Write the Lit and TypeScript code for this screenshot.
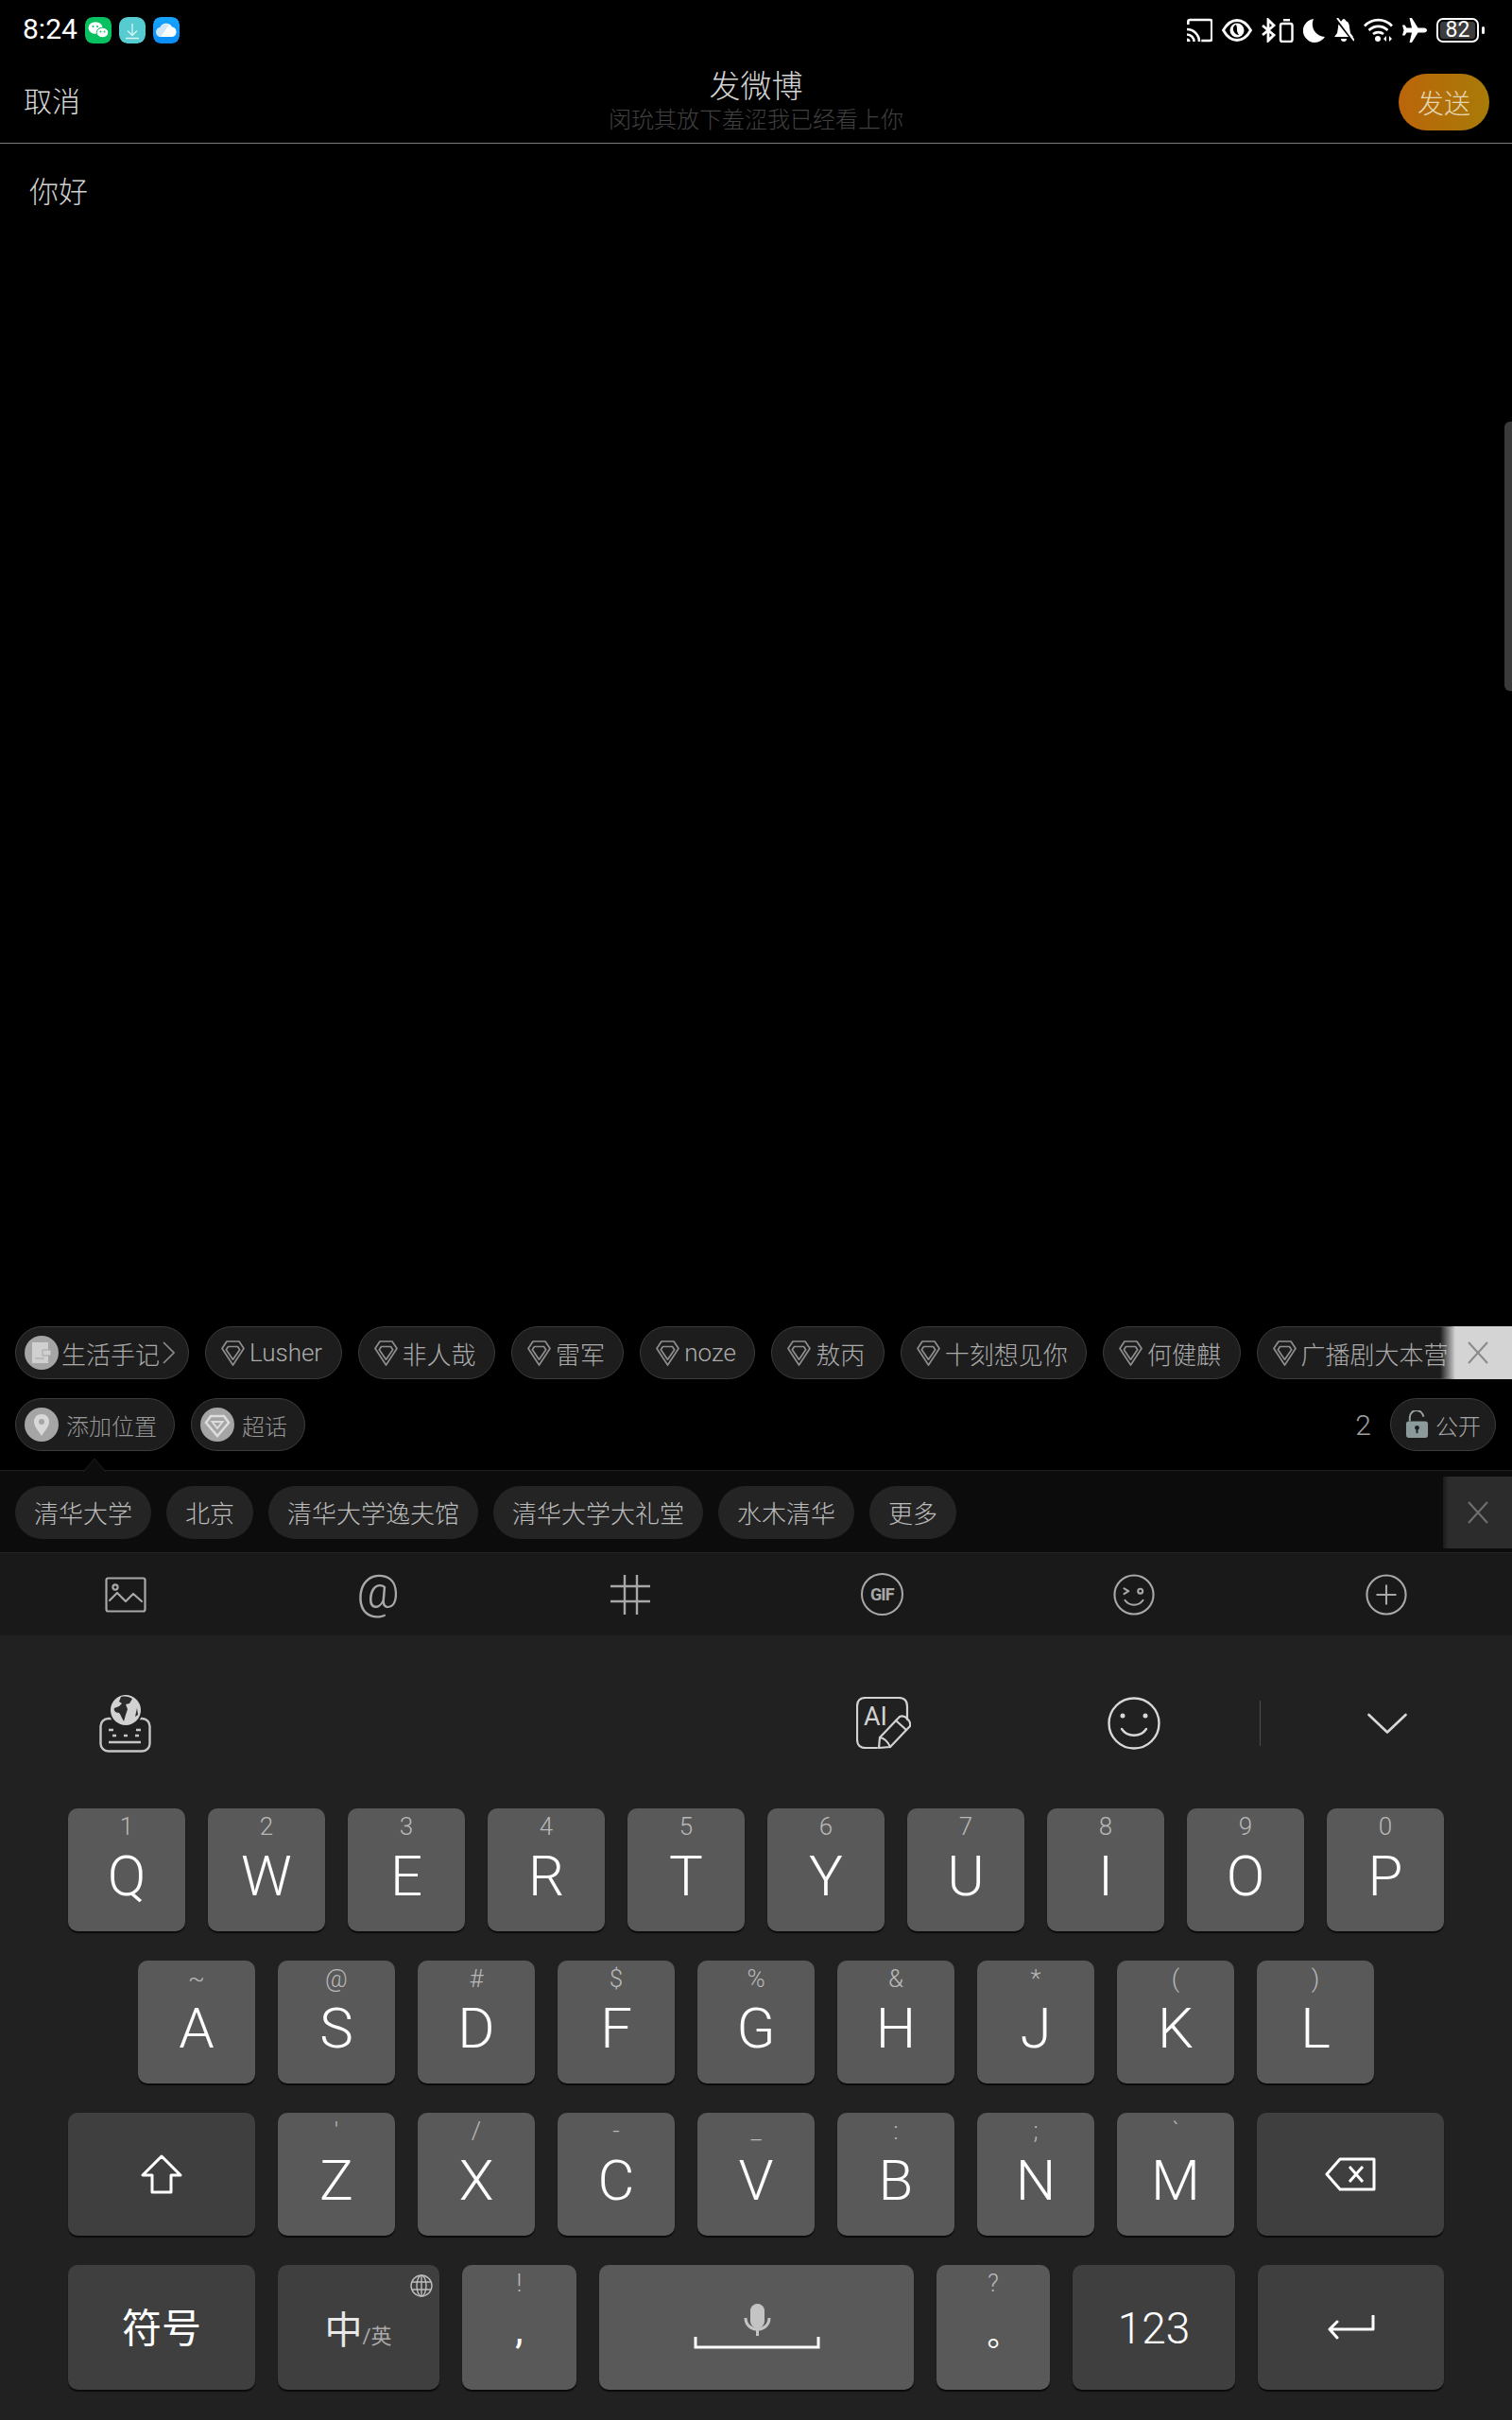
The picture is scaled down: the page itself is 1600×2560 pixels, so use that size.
import { LitElement, html, css } from "lit";
import { customElement } from "lit/decorators.js";

const diamond = html`<svg class="dia" viewBox="0 0 25 30" fill="none" stroke="#8e8e8e" stroke-width="1.7" stroke-linejoin="round"><path d="M6 3h13l5 7.5L12.5 28 1 10.5z"/><path d="M7.5 8.5h10l2.2 3.2-7.2 10.5-7.2-10.5z"/></svg>`;
const closeX = (c: string) => html`<svg class="x" viewBox="0 0 22 24" fill="none" stroke="${c}" stroke-width="2"><path d="M1 1l20 22M21 1L1 23"/></svg>`;

const tags = ["Lusher", "非人哉", "雷军", "noze", "敖丙", "十刻想见你", "何健麒", "广播剧大本营"];
const places = ["清华大学", "北京", "清华大学逸夫馆", "清华大学大礼堂", "水木清华", "更多"];
const rows: [string, string][][] = [
  [["Q","1"],["W","2"],["E","3"],["R","4"],["T","5"],["Y","6"],["U","7"],["I","8"],["O","9"],["P","0"]],
  [["A","~"],["S","@"],["D","#"],["F","$"],["G","%"],["H","&"],["J","*"],["K","("],["L",")"]],
  [["Z","'"],["X","/"],["C","-"],["V","_"],["B",":"],["N",";"],["M","\`"]],
];

const toolIcons = [
  html`<svg class="ti" viewBox="0 0 44 38" fill="none" stroke="#a8a8a8" stroke-width="2.2" stroke-linejoin="round" stroke-linecap="round"><rect x="1.5" y="1.5" width="41" height="35" rx="2"/><circle cx="11" cy="11" r="2.6"/><path d="M5 25l8-8 9 9 8-8 9 8"/></svg>`,
  html`<span class="at">@</span>`,
  html`<svg class="ti" viewBox="0 0 44 44" fill="none" stroke="#a8a8a8" stroke-width="2.4"><path d="M16 1v42M29 1v42M1 13h42M1 29h42"/></svg>`,
  html`<span class="ring"><span class="gif">GIF</span></span>`,
  html`<svg class="ti" viewBox="0 0 46 46" fill="none" stroke="#a8a8a8" stroke-width="2.2" stroke-linecap="round" stroke-linejoin="round"><circle cx="23" cy="23" r="21.5"/><path d="M12 16l5 3-5 3"/><circle cx="30" cy="19" r="2.6"/><path d="M13 29c5 7 15 7 20 0"/></svg>`,
  html`<svg class="ti" viewBox="0 0 46 46" fill="none" stroke="#a8a8a8" stroke-width="2.2"><circle cx="23" cy="23" r="21.5"/><path d="M23 12v22M12 23h22"/></svg>`,
];

@customElement("app-root")
export class AppRoot extends LitElement {
  static styles = css`
    :host { display: flex; flex-direction: column; width: 1600px; height: 2560px; background: #000; position: relative; overflow: hidden;
      font-family: Roboto, "Noto Sans CJK SC", sans-serif; font-weight: 300; }
    .status { height: 64px; display: flex; align-items: center; padding: 0 28px 0 24px; color: #fff; flex: none; }
    .time { font-size: 30px; font-weight: 400; line-height: 1; margin-right: 8px; position: relative; top: -1px; }
    .apps { display: flex; gap: 8px; }
    .app { width: 28px; height: 28px; border-radius: 8px; display: block; }
    .sys { margin-left: auto; display: flex; align-items: center; gap: 10px; }
    .sys svg { display: block; }
    .bat { width: 52px; height: 26px; display: flex; align-items: center; gap: 3px; }
    .batbody { width: 45px; height: 26px; box-sizing: border-box; border: 2px solid #fff; border-radius: 7px; padding: 2px; display: flex; }
    .batfill { width: 38px; background: #3c3c3c; border-radius: 3px; color: #fff; font-size: 23px; font-weight: 400; line-height: 18px; text-align: center; }
    .nub { width: 3px; height: 8px; background: #fff; border-radius: 2px; }

    .header { height: 87px; flex: none; display: grid; grid-template-columns: 1fr auto 1fr; align-items: center; border-bottom: 1px solid #7c7c7c; padding: 0 25px; }
    .cancel { font-size: 30px; color: #dcdcdc; line-height: 1.2; }
    .mid { text-align: center; margin-top: -1px; }
    .title { font-size: 33px; color: #d4d4d4; line-height: 40px; }
    .sub { font-size: 24px; color: #414141; line-height: 30px; }
    .send { justify-self: end; width: 96px; height: 60px; border-radius: 30px; background: linear-gradient(90deg, #bb650a, #a87b08); color: #e6d7b4; font-size: 28px; display: flex; align-items: center; justify-content: center; margin-right: -1px; }

    .editor { flex: 1; padding: 32px 31px; font-size: 31px; color: #d0d0d0; line-height: 40px; }
    .scroll { position: absolute; right: 0; top: 446px; width: 8px; height: 285px; background: #3a3a3a; border-radius: 6px 0 0 6px; }

    .tagrow { flex: none; height: 56px; position: relative; display: flex; gap: 17px; padding-left: 16px; overflow: hidden; white-space: nowrap; }
    .pill { flex: none; height: 56px; box-sizing: border-box; border: 1.5px solid #3c3c3c; background: #1d1d1d; border-radius: 28px; display: flex; align-items: center; padding: 0 19.4px 0 16px; gap: 5px; font-size: 26px; color: #ababab; }
    .pill.first { padding: 0 14px 0 9px; gap: 3px; }
    .dia { width: 25px; height: 30px; flex: none; display: block; }
    .circ { width: 36px; height: 36px; flex: none; display: block; }
    .fade { position: absolute; right: 0; top: 0; width: 76px; height: 56px; background: linear-gradient(90deg, rgba(212,212,212,0), #d4d4d4 16px); display: flex; align-items: center; justify-content: flex-end; padding-right: 25px; box-sizing: border-box; }
    .x { width: 22px; height: 24px; display: block; }

    .row2 { flex: none; height: 56px; margin-top: 20px; display: flex; align-items: center; gap: 17px; padding: 0 17px 0 16px; }
    .pill.small { font-size: 24px; color: #979797; padding: 0 18px 0 9px; gap: 8px; }
    .count { margin-left: auto; font-size: 30px; color: #a0a0a0; margin-right: 3px; }
    .pill.pub { padding: 0 15px; gap: 7px; font-size: 24px; color: #a6a6a6; }
    .lock { width: 25px; height: 29px; display: block; margin-top: -2px; }

    .panel { flex: none; height: 88px; margin-top: 20px; box-sizing: border-box; background: #0c0c0c; border-top: 1px solid #1e1e1e; border-bottom: 1px solid #242424; padding: 16px 0 0 16px; display: flex; gap: 16px; position: relative; }
    .arrow { position: absolute; left: 88px; top: -13px; width: 24px; height: 14px; }
    .chip { height: 56px; box-sizing: border-box; padding: 0 20px 2px; border-radius: 28px; background: #242424; color: #bcbcbc; font-size: 26px; display: flex; align-items: center; }
    .pclose { position: absolute; right: 0; top: 6px; height: 76px; width: 73px; background: linear-gradient(90deg, #1b1b1b, #2c2c2c 6px); display: flex; align-items: center; justify-content: flex-end; padding-right: 25px; box-sizing: border-box; }

    .tools { flex: none; height: 87px; background: #191919; display: grid; grid-template-columns: repeat(6, 1fr); align-items: center; justify-items: center; }
    .ti { width: 44px; height: 44px; display: block; }
    .at { font-size: 50px; color: #a8a8a8; line-height: 44px; font-weight: 300; margin-top: -5px; }
    .ring { width: 41px; height: 41px; border: 2.2px solid #a8a8a8; border-radius: 50%; display: flex; align-items: center; justify-content: center; }
    .gif { font-size: 18px; font-weight: 700; color: #a8a8a8; letter-spacing: -1px; }

    .kb { flex: none; height: 830px; background: #212121; display: flex; flex-direction: column; }
    .kbtop { height: 183px; flex: none; box-sizing: border-box; padding-top: 3px; display: flex; align-items: center; padding-left: 105px; }
    .kbtop svg { display: block; flex: none; }
    .ai { margin-left: 746px; }
    .smile { margin-left: 208px; }
    .div { margin-left: 105px; width: 1px; height: 48px; background: #4c4c4c; }
    .chev { margin-left: 113px; }
    .rows { display: flex; flex-direction: column; gap: 31px; }
    .row { display: flex; gap: 24px; justify-content: center; }
    .key { width: 124px; height: 130px; flex: none; background: #595959; border-radius: 10px; box-shadow: 0 2px 1px #0b0b0b; display: flex; flex-direction: column; align-items: center; color: #fff; }
    .last .key { height: 132px; }
    .fn { background: #3f3f3f; align-items: center; justify-content: center; position: relative; }
    .hint { height: 38px; font-size: 26px; line-height: 38px; color: #b8b8b8; }
    .letter { font-size: 60px; line-height: 68px; }
    .w198 { width: 198px; } .w171 { width: 171px; } .w121 { width: 121px; } .w333 { width: 333px; }
    .w120 { width: 120px; } .w172 { width: 172px; } .w197 { width: 197px; }
    .sym { font-size: 42px; font-weight: 400; line-height: 1; margin-top: 3px; }
    .zh { font-size: 40px; display: flex; align-items: baseline; color: #e8e8e8; font-weight: 400; margin-left: -1px; }
    .en { font-size: 22px; color: #aaa; }
    .globe { position: absolute; right: 7px; top: 10px; width: 24px; height: 24px; }
    .comma { font-size: 42px; line-height: 62px; font-weight: 400; }
    .period { font-family: "Noto Sans CJK TC", sans-serif; font-size: 34px; line-height: 88px; font-weight: 400; }
    .num { font-size: 46px; line-height: 1; margin-top: 2px; }
    .space { justify-content: flex-start; align-items: center; padding-top: 41px; box-sizing: border-box; }
    .space svg { display: block; }
  `;

  render() {
    return html`
      <div class="status">
        <span class="time">8:24</span>
        <div class="apps">
          <svg class="app" viewBox="0 0 28 28"><rect width="28" height="28" rx="8" fill="#08c160"/><ellipse cx="11" cy="11.5" rx="7.5" ry="6.3" fill="#fff"/><ellipse cx="18.5" cy="16.5" rx="6.3" ry="5.3" fill="#fff" stroke="#08c160"/><circle cx="8.5" cy="10" r="1" fill="#08c160"/><circle cx="13" cy="10" r="1" fill="#08c160"/><circle cx="16.5" cy="15.5" r=".9" fill="#08c160"/><circle cx="20.5" cy="15.5" r=".9" fill="#08c160"/></svg>
          <svg class="app" viewBox="0 0 28 28"><rect width="28" height="28" rx="9" fill="#56cbd0"/><path d="M14 7v12M9 14.5l5 5 5-5M7 22.5h14" fill="none" stroke="#d8f4f5" stroke-width="1.3"/></svg>
          <svg class="app" viewBox="0 0 28 28"><defs><linearGradient id="bl" x1="0" y1="0" x2="0" y2="1"><stop offset="0" stop-color="#17a4ff"/><stop offset="1" stop-color="#0a8cf5"/></linearGradient></defs><rect width="28" height="28" rx="8" fill="url(#bl)"/><path d="M8 21a5 5 0 0 1-.6-9.9A7 7 0 0 1 20 10.5 5.3 5.3 0 0 1 20 21z" fill="#fff"/><path d="M8 21a5 5 0 0 1-.6-9.9A7 7 0 0 1 17 8z" fill="#cfe6fb"/></svg>
        </div>
        <div class="sys">
          <svg width="27" height="26" viewBox="0 0 27 26" fill="none" stroke="#fff" stroke-width="2.6"><path d="M1.300 7V4q0-2 2-2h21q2 0 2 2v18q0 2-2 2h-9"/><path d="M0 12a13 13 0 0 1 13 13M0 17.500a7.500 7.500 0 0 1 7.500 7.500"/><path d="M0 21.500a3.500 3.500 0 0 1 3.500 3.500H0z" fill="#fff" stroke="none"/></svg>
          <svg width="32" height="26" viewBox="0 0 32 26"><path d="M1.500 13C6 5 11 2.500 16 2.500S26 5 30.500 13C26 21 21 23.500 16 23.500S6 21 1.500 13z" fill="none" stroke="#fff" stroke-width="2.800"/><circle cx="16" cy="13" r="7.500" fill="#fff"/><path d="M15 7c-3 1-4 5-2 8 1 2 3 3 5 3-1-2-2-3-2-5s0-4-1-6z" fill="#000"/></svg>
          <svg width="34" height="26" viewBox="0 0 34 26" fill="none" stroke="#fff"><path d="M1 8l12 10-6 6V2l6 6L1 18" stroke-width="2.800"/><rect x="20" y="6" width="12.500" height="19" rx="2" stroke-width="2.400"/><rect x="23" y="1" width="7" height="2.400" fill="#fff" stroke="none"/></svg>
          <svg width="23" height="26" viewBox="0 0 23 26"><path d="M11 1A12.500 12.500 0 1 0 23 20 13.500 13.500 0 0 1 11 1z" fill="#fff"/></svg>
          <svg width="21" height="26" viewBox="0 0 21 26"><path d="M10 1c1 0 2 1 2 2 3 1 4 4 4 7l1 6 3 4H0l3-4 1-6c0-3 1-6 4-7 0-1 1-2 2-2z" fill="#fff"/><path d="M7 22h6c0 2-1 3-3 3s-3-1-3-3z" fill="#fff"/><path d="M2 1l19 24" stroke="#000" stroke-width="3"/><path d="M3 0l18 24" stroke="#fff" stroke-width="2"/></svg>
          <svg width="31" height="26" viewBox="0 0 31 26" fill="none" stroke="#fff" stroke-width="2.600"><path d="M1 8.500c8-8.500 21-8.500 29 0M5.500 13c6-5.500 14-5.500 20 0M10 17c3-2.500 8-2.500 11 0"/><circle cx="15" cy="22" r="3" fill="#fff" stroke="none"/><path d="M24 19v6l-3-3zM27 19v6l3-3z" fill="#fff" stroke="none"/></svg>
          <svg width="26" height="26" viewBox="0 0 26 26"><path d="M26 13c0-1.500-1.500-2.500-3-2.500h-6.500L10 0H7.500l2.500 10.500H4.500L2.500 7.500H0L1.500 13 0 18.500h2.500l2-3H10L7.500 26H10l6.500-10.500H23c1.500 0 3-1 3-2.500z" fill="#fff"/></svg>
          <div class="bat"><div class="batbody"><div class="batfill">82</div></div><div class="nub"></div></div>
        </div>
      </div>

      <div class="header">
        <span class="cancel">取消</span>
        <div class="mid"><div class="title">发微博</div><div class="sub">闵玧其放下羞涩我已经看上你</div></div>
        <div class="send">发送</div>
      </div>

      <div class="editor">你好</div>
      <div class="scroll"></div>

      <div class="tagrow">
        <div class="pill first">
          <svg class="circ" viewBox="0 0 36 36"><circle cx="18" cy="18" r="18" fill="#a5a5a5"/><path d="M8 7h17v22H8z" fill="#d0d0d0"/><path d="M19 15h9v6h-9z" fill="#d0d0d0" stroke="#a5a5a5"/><path d="M11 24h10" stroke="#a5a5a5"/></svg>
          生活手记
          <svg width="13" height="24" viewBox="0 0 13 24" fill="none" stroke="#8c8c8c" stroke-width="1.600"><path d="M1 1l11 11L1 23"/></svg>
        </div>
        ${tags.map((t) => html`<div class="pill">${diamond}${t}</div>`)}
        <div class="fade">${closeX("#8a8a8a")}</div>
      </div>

      <div class="row2">
        <div class="pill small">
          <svg class="circ" viewBox="0 0 36 36"><circle cx="18" cy="18" r="18" fill="#a5a5a5"/><path d="M18 7c-5 0-8 3.500-8 8 0 5 5 10 8 15 3-5 8-10 8-15 0-4.500-3-8-8-8z" fill="#d8d8d8"/><circle cx="18" cy="15" r="3" fill="#a5a5a5"/></svg>
          添加位置
        </div>
        <div class="pill small">
          <svg class="circ" viewBox="0 0 36 36"><circle cx="18" cy="18" r="18" fill="#a5a5a5"/><path d="M11 9h14l5 7-12 14L6 16z" fill="none" stroke="#ddd" stroke-width="2.600"/><path d="M12.500 15h11L18 22z" fill="none" stroke="#ddd" stroke-width="2"/></svg>
          超话
        </div>
        <span class="count">2</span>
        <div class="pill pub">
          <svg class="lock" viewBox="0 0 26 30"><path d="M5 12V8a7.500 7.500 0 0 1 15-1" fill="none" stroke="#9aa6a6" stroke-width="2"/><rect x="1" y="12" width="24" height="18" rx="3" fill="#8b9a9a"/><circle cx="13" cy="19" r="2.500" fill="#1d1d1d"/><path d="M12 20h2v5h-2z" fill="#1d1d1d"/></svg>
          公开
        </div>
      </div>

      <div class="panel">
        <svg class="arrow" viewBox="0 0 24 14"><path d="M0 14L12 0l12 14z" fill="#0c0c0c" stroke="#1e1e1e"/><path d="M1 14h22" stroke="#0c0c0c" stroke-width="2"/></svg>
        ${places.map((p) => html`<div class="chip">${p}</div>`)}
        <div class="pclose">${closeX("#707070")}</div>
      </div>

      <div class="tools">${toolIcons}</div>

      <div class="kb">
        <div class="kbtop">
          <svg width="55" height="62" viewBox="0 0 55 62" fill="none">
            <rect x="1.500" y="26" width="52" height="34.500" rx="8" stroke="#c6c6c6" stroke-width="2.400"/>
            <circle cx="28" cy="17" r="18" fill="#212121"/>
            <circle cx="28" cy="17" r="16" fill="#d2d2d2"/>
            <path d="M23 3c5-1 9 0 12 2l-3 5-4 1 2 5-2 6-2 7c-2-3-3-7-5-9-4 0-6-3-5-5l5-2 3-3-3-2z" fill="#2a2a2a"/>
            <path d="M40 15l1 7-3 2z" fill="#2a2a2a"/>
            <path d="M10 38h5M39 38h5M14 44h4M26 44h4M38 44h4M10 51h34" stroke="#c6c6c6" stroke-width="2.600"/>
          </svg>
          <svg class="ai" width="58" height="56" viewBox="0 0 58 56" fill="none" stroke="#d2d2d2" stroke-width="2.200" stroke-linecap="round" stroke-linejoin="round">
            <path d="M22 54H10q-9 0-9-9V10q0-9 9-9h35q9 0 9 9v14"/>
            <text x="8" y="30" font-family="Roboto" font-size="27" font-weight="400" fill="#d2d2d2" stroke="none">AI</text>
            <path d="M24 54l1-11 21-22q4-2 8 2t3 8L36 53z"/><path d="M25 43q7 1 11 10M42 25l11 10"/>
          </svg>
          <svg class="smile" width="56" height="56" viewBox="0 0 56 56" fill="none" stroke="#d8d8d8" stroke-width="2.400" stroke-linecap="round"><circle cx="28" cy="28" r="26.500"/><circle cx="16" cy="20" r="2.500" fill="#d8d8d8" stroke="none"/><circle cx="40" cy="20" r="2.500" fill="#d8d8d8" stroke="none"/><path d="M15 34c6 9 20 9 26 0"/></svg>
          <div class="div"></div>
          <svg class="chev" width="42" height="22" viewBox="0 0 42 22" fill="none" stroke="#d8d8d8" stroke-width="2.600" stroke-linecap="round" stroke-linejoin="round"><path d="M1.500 2L21 20.500 40.500 2"/></svg>
        </div>

        <div class="rows">
          ${rows.slice(0, 2).map((r) => html`<div class="row">${r.map(([l, h]) => this.key(l, h))}</div>`)}
          <div class="row">
            <div class="key fn w198"><svg width="44" height="42" viewBox="0 0 44 42" fill="none" stroke="#fff" stroke-width="3" stroke-linejoin="round"><path d="M22 2L2 22h10v18h20V22h10z"/></svg></div>
            ${rows[2].map(([l, h]) => this.key(l, h))}
            <div class="key fn w198"><svg width="54" height="36" viewBox="0 0 54 36" fill="none" stroke="#fff" stroke-width="3" stroke-linejoin="round"><path d="M52 2H16L2 18l14 16h36z"/><path d="M26 10l14 16M40 10L26 26"/></svg></div>
          </div>
          <div class="row last">
            <div class="key fn w198"><span class="sym">符号</span></div>
            <div class="key fn w171">
              <span class="zh">中<span class="en">/英</span></span>
              <svg class="globe" viewBox="0 0 24 24" fill="none" stroke="#bdbdbd" stroke-width="1.400"><circle cx="12" cy="12" r="11"/><ellipse cx="12" cy="12" rx="5" ry="11"/><path d="M12 1v22M2 8h20M2 16h20"/></svg>
            </div>
            <div class="key w121"><span class="hint">!</span><span class="comma">,</span></div>
            <div class="key w333 space">
              <svg width="134" height="48" viewBox="0 0 134 48" fill="none">
                <rect x="60" y="0" width="15" height="26" rx="7.500" fill="#c4c4c4"/>
                <path d="M55 15c0 16 25 16 25 0M67.500 27v7" stroke="#c4c4c4" stroke-width="3"/>
                <path d="M2 35v11h130V35" stroke="#fff" stroke-width="3"/>
              </svg>
            </div>
            <div class="key w120"><span class="hint">?</span><span class="period">。</span></div>
            <div class="key fn w172"><span class="num">123</span></div>
            <div class="key fn w197"><svg width="50" height="26" viewBox="0 0 50 26" fill="none" stroke="#fff" stroke-width="3" stroke-linecap="round" stroke-linejoin="round"><path d="M48 1v14H3M10 7l-8 8 8 9"/></svg></div>
          </div>
        </div>
      </div>
    `;
  }

  key(l: string, h: string) {
    return html`<div class="key"><span class="hint">${h}</span><span class="letter">${l}</span></div>`;
  }
}
